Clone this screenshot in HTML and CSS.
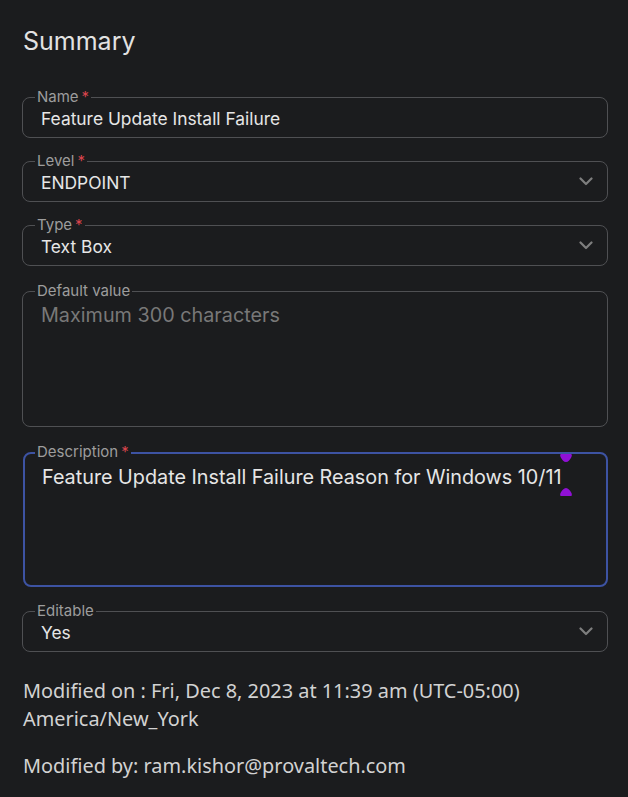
FILE: index.html
```html
<!DOCTYPE html>
<html lang="en">
<head>
<meta charset="utf-8">
<title>Summary</title>
<link rel="stylesheet" href="styles.css">
</head>
<body>
<main class="panel">
  <h2 class="title">Summary</h2>

  <div class="field field-name">
    <span class="label">Name<span class="req">*</span></span>
    <span class="value">Feature Update Install Failure</span>
  </div>

  <div class="field field-select">
    <span class="label">Level<span class="req">*</span></span>
    <span class="value">ENDPOINT</span>
    <svg class="chev" width="14" height="9" viewBox="0 0 14 9"><path d="M1.5 1.5 L7 7 L12.5 1.5" fill="none" stroke="#7e7e7e" stroke-width="2.2" stroke-linecap="round" stroke-linejoin="round"/></svg>
  </div>

  <div class="field field-select">
    <span class="label">Type<span class="req">*</span></span>
    <span class="value">Text Box</span>
    <svg class="chev" width="14" height="9" viewBox="0 0 14 9"><path d="M1.5 1.5 L7 7 L12.5 1.5" fill="none" stroke="#7e7e7e" stroke-width="2.2" stroke-linecap="round" stroke-linejoin="round"/></svg>
  </div>

  <div class="field field-area field-default">
    <span class="label">Default value</span>
    <span class="area-text placeholder">Maximum 300 characters</span>
  </div>

  <div class="field field-area field-desc">
    <span class="label">Description<span class="req">*</span></span>
    <span class="area-text">Feature Update Install Failure Reason for Windows 10/11</span>
    <svg class="handle handle-top" width="12" height="9" viewBox="0 0 12 9"><path d="M1.2 0 H10.8 C12 0 12.2 1.8 11.2 3.4 C9.8 5.8 8.2 8 6 8 C3.8 8 2.2 5.8 0.8 3.4 C-0.2 1.8 0 0 1.2 0 Z" fill="#9010d6"/></svg>
    <svg class="handle handle-bot" width="12" height="9" viewBox="0 0 12 9"><path d="M1.2 9 H10.8 C12 9 12.2 7.2 11.2 5.6 C9.8 3.2 8.2 1 6 1 C3.8 1 2.2 3.2 0.8 5.6 C-0.2 7.2 0 9 1.2 9 Z" fill="#9010d6"/></svg>
  </div>

  <div class="field field-select field-edit">
    <span class="label">Editable</span>
    <span class="value">Yes</span>
    <svg class="chev" width="14" height="9" viewBox="0 0 14 9"><path d="M1.5 1.5 L7 7 L12.5 1.5" fill="none" stroke="#7e7e7e" stroke-width="2.2" stroke-linecap="round" stroke-linejoin="round"/></svg>
  </div>

  <div class="meta">
    <p class="meta-line">Modified on : Fri, Dec 8, 2023 at 11:39 am (UTC-05:00)<br>America/New_York</p>
    <p class="meta-line">Modified by: ram.kishor@provaltech.com</p>
  </div>
</main>
</body>
</html>
```

FILE: styles.css
```css
html, body {
  margin: 0;
  padding: 0;
  background: #1b1c1e;
}

body {
  font-family: Inter, "Noto Sans", sans-serif;
  color: #e4e4e4;
}

.panel {
  padding: 26px 20px 0 22px;
  display: flex;
  flex-direction: column;
}

.title {
  margin: 0 0 0 1px;
  font-size: 25px;
  font-weight: 400;
  line-height: 30px;
  color: #e2e2e2;
}

.field {
  position: relative;
  box-sizing: border-box;
  border: 1px solid #4f5053;
  border-radius: 8px;
  height: 41px;
  margin-top: 23px;
  display: flex;
  align-items: center;
  padding: 0 14px 0 18px;
}

.field-name {
  margin-top: 41px;
}

.label {
  position: absolute;
  top: -10px;
  left: 12px;
  padding: 0 2px;
  background: #1b1c1e;
  font-size: 15px;
  line-height: 18px;
  color: #9d9d9d;
}

.req {
  color: #d9444c;
  margin-left: 3px;
}

.value {
  font-size: 17.4px;
  color: #e6e6e6;
  padding-top: 1px;
}

.chev {
  margin-left: auto;
}

.field-area {
  align-items: flex-start;
  height: 136px;
  margin-top: 25px;
}

.field-desc {
  height: 135px;
  margin-top: 25px;
  border: 2px solid #3d53a3;
  margin-left: 1px;
  padding: 0 17px;
}

.field-desc .label {
  top: -11px;
  left: 10px;
}

.area-text {
  font-size: 19.8px;
  line-height: 24px;
  margin-top: 11px;
  color: #e6e6e6;
}

.field-desc .area-text {
  margin-top: 11px;
}

.placeholder {
  color: #787878;
}

.handle {
  position: absolute;
  left: 535px;
}

.handle-top {
  top: 0;
}

.handle-bot {
  top: 33px;
}

.field-edit {
  margin-top: 24px;
}

.meta {
  margin-top: 25px;
  font-family: "Noto Sans", sans-serif;
  font-size: 19.9px;
  line-height: 28px;
  color: #d2d2d2;
}

.meta-line {
  margin: 0 0 19px 1px;
}
```
